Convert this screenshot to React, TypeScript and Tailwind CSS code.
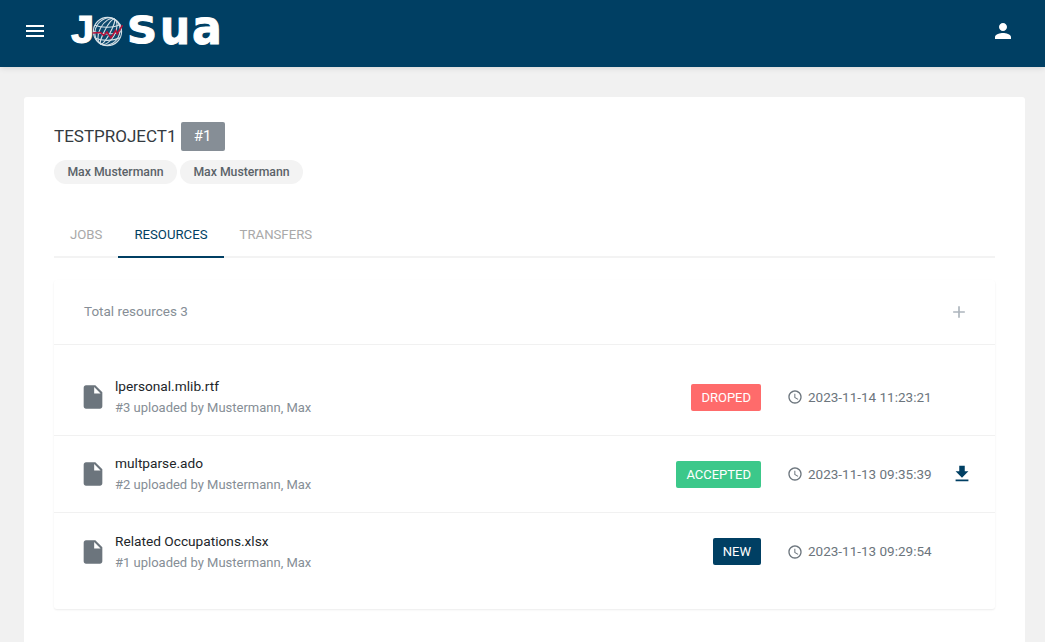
const Globe = () => (
  <svg width="31" height="31" viewBox="0 0 32 32" className="shrink-0">
    <circle cx="16" cy="16" r="15" fill="#0d4a6e" />
    <g fill="none" stroke="#d5e0e6" strokeWidth="1.1">
      <circle cx="16" cy="16" r="14.6" />
      <ellipse cx="16" cy="16" rx="8" ry="14.6" transform="rotate(28 16 16)" />
      <ellipse cx="16" cy="16" rx="3" ry="14.6" transform="rotate(28 16 16)" />
      <ellipse cx="16" cy="16" rx="12.5" ry="14.6" transform="rotate(28 16 16)" />
      <path d="M3 9.5c7 3 19 3 26.500-1M1.500 16c8 3.500 20 3.500 29 0M3.500 23c7 3 18 3 25.500-.5" />
    </g>
    <path
      d="M0.500 17.500l8.500-.5 3 3 3.500-3.500 4 6 5-7.500 1.500 3.500 5.500-9"
      fill="none"
      stroke="#b3123a"
      strokeWidth="1.700"
    />
  </svg>
);

const Icon = ({ d, size, className }: { d: string; size: number; className: string }) => (
  <svg width={size} height={size} viewBox="0 0 24 24" fill="currentColor" className={className}>
    <path d={d} />
  </svg>
);

const fileIcon = "M6 2c-1.100 0-1.990.9-1.990 2L4 20c0 1.100.89 2 1.990 2H18c1.100 0 2-.9 2-2V8l-6-6H6zm7 7V3.500L18.500 9H13z";
const clockIcon =
  "M11.990 2C6.470 2 2 6.480 2 12s4.470 10 9.990 10C17.520 22 22 17.520 22 12S17.520 2 11.990 2zM12 20c-4.420 0-8-3.580-8-8s3.580-8 8-8 8 3.580 8 8-3.580 8-8 8zm.5-13H11v6l5.250 3.150.75-1.230-4.500-2.670z";

const resources = [
  { name: "lpersonal.mlib.rtf", sub: "#3 uploaded by Mustermann, Max", status: "DROPED", color: "bg-[#ff6b6b]", date: "2023-11-14 11:23:21", download: false },
  { name: "multparse.ado", sub: "#2 uploaded by Mustermann, Max", status: "ACCEPTED", color: "bg-[#3cc88a]", date: "2023-11-13 09:35:39", download: true },
  { name: "Related Occupations.xlsx", sub: "#1 uploaded by Mustermann, Max", status: "NEW", color: "bg-[#003f63]", date: "2023-11-13 09:29:54", download: false },
];

export default function App() {
  return (
    <div className="h-[642px] overflow-hidden bg-[#f1f1f1] font-['Roboto',sans-serif] text-[13px] text-[#343a40]">
      <header className="flex h-[67px] items-center bg-[#003f63] pb-[5px] pl-[23px] pr-[30px] text-white shadow-[0_1px_6px_rgba(0,0,0,0.12)]">
        <Icon d="M3 18h18v-2H3v2zm0-5h18v-2H3v2zm0-7v2h18V6H3z" size={24} className="shrink-0" />
        <div className="ml-[24px] flex h-[32px] items-center font-['DejaVu_Sans',sans-serif] font-bold leading-none [-webkit-text-stroke:1px_white]">
          <span className="mb-[2px] w-[21px] origin-left scale-x-[1.1] font-['Liberation_Sans',sans-serif] text-[38px]">J</span>
          <Globe />
          <span className="mb-[2px] ml-[4px] w-[33px] origin-left scale-x-[1.1] text-[38px]">S</span>
          <span className="mb-[9px] w-[32px] origin-left scale-x-[.88] text-[48px]">u</span>
          <span className="mb-[9px] w-[30px] origin-left scale-x-[.92] text-[48px]">a</span>
        </div>
        <Icon
          d="M12 12c2.210 0 4-1.790 4-4s-1.790-4-4-4-4 1.790-4 4 1.790 4 4 4zm0 2c-2.670 0-8 1.340-8 4v2h16v-2c0-2.660-5.330-4-8-4z"
          size={24}
          className="ml-auto"
        />
      </header>

      <main className="mx-[20px] ml-[24px] mt-[30px] h-[560px] rounded-[3px] bg-white px-[30px] pt-[25px]">
        <div className="flex items-center">
          <h1 className="text-[17px] font-normal leading-[29px] text-[#343a40]">TESTPROJECT1</h1>
          <span className="ml-[4px] flex h-[29px] w-[44px] items-center justify-center rounded-[2px] bg-[#868e96] text-[15px] font-normal text-white">
            #1
          </span>
        </div>
        <div className="mt-[9px] flex gap-[3px]">
          {["Max Mustermann", "Max Mustermann"].map((n, i) => (
            <span key={i} className="flex h-[24px] w-[123px] items-center justify-center rounded-full bg-[#f3f3f3] text-[12.25px] font-medium text-[#5a6268]">
              {n}
            </span>
          ))}
        </div>

        <nav className="mt-[34px] flex h-[40px] border-b-2 border-[#f3f3f3] text-[13.2px] font-normal">
          <span className="flex h-[40px] items-center px-[16px] pb-[6px] text-[#a9a9a9]">JOBS</span>
          <span className="flex h-[40px] items-center border-b-2 border-[#003f63] px-[16px] pb-[4px] text-[#003f63]">RESOURCES</span>
          <span className="flex h-[40px] items-center px-[16px] pb-[6px] text-[#a9a9a9]">TRANSFERS</span>
        </nav>

        <section className="mt-[22px] h-[329px] rounded-[3px] bg-white shadow-[0_1px_2px_rgba(0,0,0,0.08)]">
          <div className="flex h-[65px] items-center justify-between border-b border-[#f1f1f1] pb-[1px] pl-[30px] pr-[26px]">
            <span className="text-[13.5px] text-[#868e96]">Total resources 3</span>
            <Icon d="M19 13h-6v6h-2v-6H5v-2h6V5h2v6h6v2z" size={20} className="text-[#adb5bd]" />
          </div>
          <div className="pt-[14px]">
            {resources.map((r, i) => (
              <div key={r.name} className={`flex h-[77px] items-center pl-[25px] ${i < 2 ? "border-b border-[#f1f1f1]" : ""}`}>
                <Icon d={fileIcon} size={28} className="shrink-0 text-[#6c757d]" />
                <div className="ml-[8px] flex-1">
                  <div className="text-[13.7px] leading-[22px] text-[#212529]">{r.name}</div>
                  <div className="text-[13px] leading-[22px] text-[#868e96]">{r.sub}</div>
                </div>
                <span className={`flex h-[27px] items-center rounded-[2px] px-[10px] pt-[1px] text-[13px] text-white ${r.color}`}>{r.status}</span>
                <div className="ml-[26px] flex w-[143px] items-center gap-[5px] whitespace-nowrap text-[13.5px] text-[#6c757d]">
                  <Icon d={clockIcon} size={16} className="shrink-0" />
                  <span>{r.date}</span>
                </div>
                <div className="flex w-[65px] pl-[21px]">
                  {r.download && <Icon d="M19 9h-4V3H9v6H5l7 7 7-7zM5 18v2h14v-2H5z" size={22} className="text-[#003f63]" />}
                </div>
              </div>
            ))}
          </div>
        </section>
      </main>
    </div>
  );
}
